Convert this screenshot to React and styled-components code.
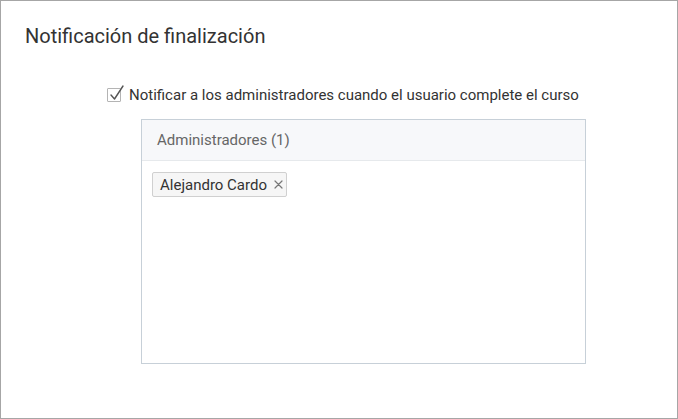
import styled, { createGlobalStyle } from "styled-components";

const GlobalStyle = createGlobalStyle`
  html, body {
    margin: 0;
    padding: 0;
    background: #fff;
  }
  body {
    font-family: Roboto, "Liberation Sans", sans-serif;
    color: #333;
  }
`;

const Frame = styled.div`
  box-sizing: border-box;
  width: 678px;
  height: 419px;
  border: 1px solid #a6a6a6;
  background: #fff;
  padding: 22px 24px 0 24px;
`;

const Title = styled.h2`
  margin: 0;
  font-size: 20px;
  font-weight: 400;
  line-height: 26px;
  color: #333;
`;

const Body = styled.div`
  display: flex;
  flex-direction: column;
  padding: 36px 0 0 82px;
`;

const CheckRow = styled.label`
  display: flex;
  align-items: center;
  gap: 8px;
  font-size: 15px;
  line-height: 20px;
  color: #333;
`;

const CheckBox = styled.span`
  position: relative;
  box-sizing: border-box;
  width: 14px;
  height: 14px;
  border: 1px solid #b4b4b4;
  border-radius: 1px;
  background: #fff;

  svg {
    position: absolute;
    left: 1px;
    top: -4px;
  }
`;

const Panel = styled.div`
  box-sizing: border-box;
  width: 445px;
  height: 245px;
  margin: 14px 0 0 34px;
  border: 1px solid #c7d0d8;
  display: flex;
  flex-direction: column;
`;

const PanelHeader = styled.div`
  height: 40px;
  display: flex;
  align-items: center;
  padding: 0 15px;
  background: #f7f8fa;
  border-bottom: 1px solid #e6e9ec;
  font-size: 15px;
  color: #666;
`;

const PanelBody = styled.div`
  display: flex;
  flex-wrap: wrap;
  align-items: flex-start;
  gap: 6px;
  padding: 11px 10px;
`;

const Tag = styled.span`
  box-sizing: border-box;
  display: inline-flex;
  align-items: center;
  gap: 7px;
  height: 25px;
  padding: 0 3px 0 7px;
  border: 1px solid #d0d0d0;
  border-radius: 2px;
  background: #f6f6f6;
  font-size: 15px;
  color: #333;
`;

const Remove = styled.span`
  display: flex;
  align-items: center;
`;

const Check = () => (
  <svg width="16" height="16" viewBox="0 0 16 16" fill="none">
    <path d="M2 10 L5.5 14 L14 1" stroke="#555" strokeWidth="1.4" strokeLinecap="round" strokeLinejoin="round" />
  </svg>
);

const Cross = () => (
  <svg width="9" height="9" viewBox="0 0 9 9" fill="none">
    <path d="M1 1 L8 8 M8 1 L1 8" stroke="#777" strokeWidth="1.2" strokeLinecap="round" />
  </svg>
);

const App = () => {
  const admins = ["Alejandro Cardo"];
  return (
    <>
      <GlobalStyle />
      <Frame>
        <Title>Notificación de finalización</Title>
        <Body>
          <CheckRow>
            <CheckBox>
              <Check />
            </CheckBox>
            Notificar a los administradores cuando el usuario complete el curso
          </CheckRow>
          <Panel>
            <PanelHeader>Administradores ({admins.length})</PanelHeader>
            <PanelBody>
              {admins.map((name) => (
                <Tag key={name}>
                  {name}
                  <Remove>
                    <Cross />
                  </Remove>
                </Tag>
              ))}
            </PanelBody>
          </Panel>
        </Body>
      </Frame>
    </>
  );
};

export default App;
